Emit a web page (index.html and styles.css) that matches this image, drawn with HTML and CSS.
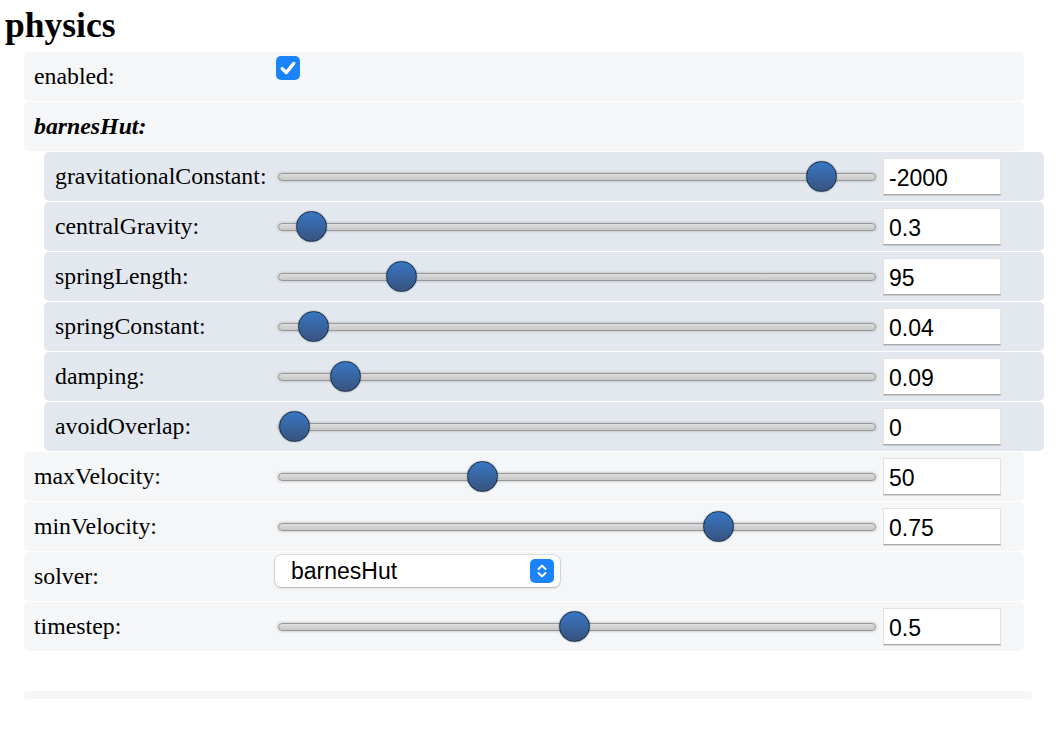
FILE: index.html
```html
<!DOCTYPE html>
<html>
<head>
<meta charset="utf-8">
<title>physics</title>
<link rel="stylesheet" href="styles.css">
</head>
<body>
<h1 class="title">physics</h1>
<div class="config">
  <div class="item s2">
    <span class="label">enabled:</span>
    <span class="checkbox"><svg width="24" height="24" viewBox="0 0 24 24"><rect x="0" y="0" width="24" height="24" rx="5" fill="#1b83fb"/><path d="M6.2 12.6 L10.2 16.6 L17.8 7.4" fill="none" stroke="#fff" stroke-width="3.3" stroke-linecap="round" stroke-linejoin="round"/></svg></span>
  </div>
  <div class="item s2 header"><span class="label">barnesHut:</span></div>

  <div class="item s3">
    <span class="label">gravitationalConstant:</span>
    <input class="range" type="range" min="-30000" max="0" step="50" value="-2000">
    <input class="num" type="text" value="-2000">
  </div>
  <div class="item s3">
    <span class="label">centralGravity:</span>
    <input class="range" type="range" min="0" max="10" step="0.05" value="0.3">
    <input class="num" type="text" value="0.3">
  </div>
  <div class="item s3">
    <span class="label">springLength:</span>
    <input class="range" type="range" min="0" max="500" step="5" value="95">
    <input class="num" type="text" value="95">
  </div>
  <div class="item s3">
    <span class="label">springConstant:</span>
    <input class="range" type="range" min="0" max="1.2" step="0.005" value="0.04">
    <input class="num" type="text" value="0.04">
  </div>
  <div class="item s3">
    <span class="label">damping:</span>
    <input class="range" type="range" min="0" max="1" step="0.01" value="0.09">
    <input class="num" type="text" value="0.09">
  </div>
  <div class="item s3">
    <span class="label">avoidOverlap:</span>
    <input class="range" type="range" min="0" max="1" step="0.01" value="0">
    <input class="num" type="text" value="0">
  </div>

  <div class="item s2">
    <span class="label">maxVelocity:</span>
    <input class="range" type="range" min="0" max="150" step="1" value="50">
    <input class="num" type="text" value="50">
  </div>
  <div class="item s2">
    <span class="label">minVelocity:</span>
    <input class="range" type="range" min="0" max="1" step="0.01" value="0.75">
    <input class="num" type="text" value="0.75">
  </div>
  <div class="item s2">
    <span class="label">solver:</span>
    <div class="select">
      <span class="select-text">barnesHut</span>
      <span class="select-arrow"><svg width="24" height="24" viewBox="0 0 24 24"><rect width="24" height="24" rx="5" fill="#1b83fb"/><path d="M8.5 10 L12 6.6 L15.5 10 M8.5 14 L12 17.4 L15.5 14" fill="none" stroke="#fff" stroke-width="2" stroke-linecap="round" stroke-linejoin="round"/></svg></span>
    </div>
  </div>
  <div class="item s2">
    <span class="label">timestep:</span>
    <input class="range" type="range" min="0.01" max="1" step="0.01" value="0.5">
    <input class="num" type="text" value="0.5">
  </div>
</div>
<div class="footer-bar"></div>
</body>
</html>
```
FILE: styles.css
```css
html, body {
  margin: 0;
  padding: 0;
  background: #ffffff;
}
body {
  padding: 5px 0 0 5px;
  font-family: "Liberation Serif", "Times New Roman", serif;
  color: #000;
}
.title {
  margin: 0 0 7px 0;
  font-size: 35.5px;
  line-height: 40px;
  font-weight: bold;
}
.config {
  display: flex;
  flex-direction: column;
  gap: 1px;
}
.item {
  display: flex;
  align-items: center;
  height: 49px;
  width: 1000px;
  border-radius: 5px;
  box-sizing: border-box;
}
.item.s2 {
  margin-left: 19px;
  background: #f5f6f8;
  padding-left: 10px;
}
.item.s3 {
  margin-left: 39px;
  background: #e3e8ef;
  padding-left: 11px;
}
.label {
  font-size: 23.8px;
  line-height: 49px;
  align-self: flex-start;
  flex: none;
}
.s2 .label { width: 244px; }
.s3 .label { width: 223px; }
.header .label {
  font-weight: bold;
  font-style: italic;
}
.checkbox {
  align-self: flex-start;
  margin-top: 4px;
  margin-left: -2px;
  width: 24px;
  height: 24px;
  display: block;
}
.checkbox svg { display: block; }

.range {
  -webkit-appearance: none;
  appearance: none;
  margin: 0;
  padding: 0;
  width: 598px;
  height: 34px;
  background: transparent;
  border: 0;
  flex: none;
}
.range:focus { outline: none; }
.range::-webkit-slider-runnable-track {
  height: 8px;
  border: 1px solid #999999;
  border-radius: 5px;
  background: linear-gradient(to bottom, #dedede 0%, #c8c8c8 99%);
  box-shadow: 0 0 3px 0 #aaaaaa;
}
.range::-webkit-slider-thumb {
  -webkit-appearance: none;
  appearance: none;
  width: 31px;
  height: 31px;
  border: 1px solid #14334b;
  border-radius: 50%;
  background: linear-gradient(to bottom, #3876c2 0%, #385380 100%);
  box-shadow: 0 0 1px 0 #111927;
  margin-top: -12.5px;
}
.num {
  margin: 0 0 0 7px;
  width: 118px;
  height: 37px;
  box-sizing: border-box;
  padding: 3px 0 0 5px;
  font-family: "Liberation Sans", Arial, sans-serif;
  font-size: 23px;
  color: #000;
  background: #fff;
  border: 1px solid #e2e2e2;
  border-bottom-color: #a9a9a9;
  box-shadow: 0 1px 0 rgba(0, 0, 0, 0.12);
  border-radius: 0;
  outline: none;
  flex: none;
}
.select {
  align-self: flex-start;
  margin-top: 3px;
  margin-left: -3px;
  width: 285px;
  height: 32px;
  box-sizing: border-box;
  background: #fff;
  border-radius: 6px;
  box-shadow: 0 0 0 0.5px rgba(0, 0, 0, 0.18), 0 1px 2px rgba(0, 0, 0, 0.22);
  display: flex;
  align-items: center;
  justify-content: space-between;
  padding: 0 6px 0 16px;
}
.select-text {
  font-family: "Liberation Sans", Arial, sans-serif;
  font-size: 23px;
  line-height: 32px;
}
.select-arrow { display: block; width: 24px; height: 24px; }
.select-arrow svg { display: block; }
.footer-bar {
  margin: 40px 0 0 19px;
  width: 1008px;
  height: 8px;
  border-radius: 4px;
  background: #f5f6f8;
}
```
